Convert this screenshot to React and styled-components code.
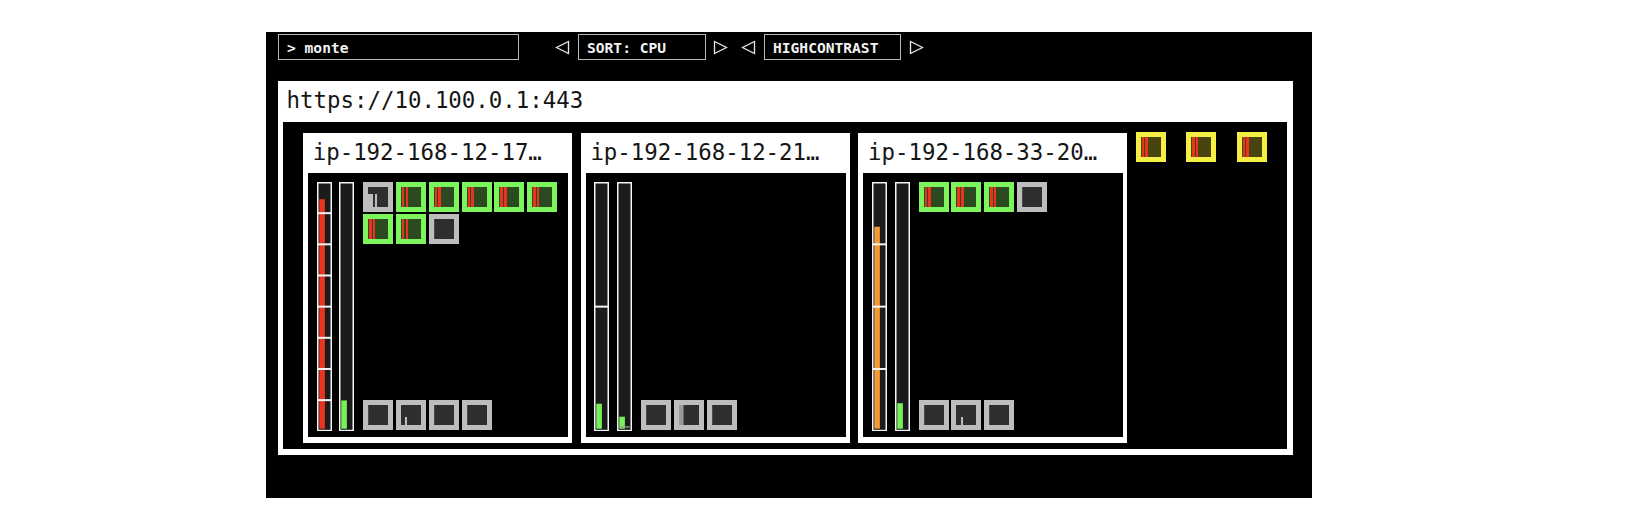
import React from "react";
import styled, { createGlobalStyle } from "styled-components";

const GlobalStyle = createGlobalStyle`
  html, body { margin: 0; padding: 0; background: #ffffff; }
  body { font-family: "DejaVu Sans Mono", "Liberation Mono", monospace; }
`;

const MONO = `"DejaVu Sans Mono", "Liberation Mono", monospace`;

const Screen = styled.div`
  margin: 32px 0 0 266px;
  width: 1046px;
  height: 466px;
  box-sizing: border-box;
  background: #000;
  padding: 2px 0 0 12px;
`;

const TopBar = styled.div`
  display: flex;
  align-items: center;
  height: 26px;
`;

const TextBox = styled.div`
  box-sizing: border-box;
  width: ${(p) => p.$w}px;
  height: 26px;
  border: 1px solid #b8b8b8;
  color: #f2f2f2;
  font-family: ${MONO};
  font-weight: bold;
  font-size: 14.6px;
  line-height: 25px;
  padding-left: 8px;
  white-space: pre;
  margin-left: ${(p) => p.$ml || 0}px;
`;

const Arrow = styled.svg`
  display: block;
  width: 15px;
  height: 15px;
  margin-left: ${(p) => p.$ml}px;
  flex: none;
`;

const ArrowLeft = ({ ml }) => (
  <Arrow $ml={ml} viewBox="0 0 15 15">
    <polygon points="13.5,1.5 13.5,13.5 1.5,7.5" fill="none" stroke="#e8e8e8" strokeWidth="1.3" />
  </Arrow>
);

const ArrowRight = ({ ml }) => (
  <Arrow $ml={ml} viewBox="0 0 15 15">
    <polygon points="1.5,1.5 1.5,13.5 13.5,7.5" fill="none" stroke="#e8e8e8" strokeWidth="1.3" />
  </Arrow>
);

const ClusterPanel = styled.div`
  margin-top: 21px;
  width: 1015px;
  box-sizing: border-box;
  background: #fff;
  padding: 0 6px 6px 5px;
`;

const ClusterTitle = styled.div`
  height: 41px;
  line-height: 39px;
  padding-left: 3.6px;
  font-family: ${MONO};
  font-size: 22.4px;
  color: #151515;
  white-space: pre;
`;

const ClusterBody = styled.div`
  height: 327px;
  box-sizing: border-box;
  background: #000;
  display: flex;
  align-items: flex-start;
  padding: 9.5px 0 0 20px;
`;

const NodeRow = styled.div`
  display: flex;
  gap: 8.7px;
  margin-top: 1.5px;
`;

const NodeCard = styled.div`
  width: 269px;
  box-sizing: border-box;
  background: #fff;
  padding: 0 4px 6px 5px;
`;

const NodeTitle = styled.div`
  height: 40px;
  line-height: 38.5px;
  padding-left: 4.7px;
  font-family: ${MONO};
  font-size: 22.4px;
  color: #151515;
  white-space: pre;
  overflow: hidden;
`;

const NodeBody = styled.div`
  height: 264px;
  box-sizing: border-box;
  background: #000;
  display: flex;
  padding: 8.7px 0 6px 8.7px;
`;

const Gauges = styled.div`
  display: flex;
  gap: 7.6px;
  flex: none;
`;

const PodArea = styled.div`
  margin-left: 9px;
  width: 200px;
  display: flex;
  flex-direction: column;
  justify-content: space-between;
  padding-bottom: 0.8px;
`;

const PodGrid = styled.div`
  display: flex;
  flex-wrap: wrap;
  gap: 2.8px;
`;

const PodStrip = styled.div`
  display: flex;
  gap: 2.8px;
  margin-left: ${(p) => p.$ml || 0}px;
`;

const POD = {
  ok: { border: "#7cf45c", inner: "#2b4a1f" },
  gray: { border: "#bdbdbd", inner: "#2e2e2e" },
  pending: { border: "#f6ef43", inner: "#49430f" },
};

const Pod = styled.div`
  width: 30px;
  height: 30px;
  box-sizing: border-box;
  flex: none;
  border: 5px solid ${(p) => POD[p.$kind].border};
  background: ${(p) => POD[p.$kind].inner};
  display: flex;
  align-items: flex-end;
`;

const Stripe = styled.div`
  flex: none;
  width: ${(p) => p.$w}px;
  height: ${(p) => p.$h}%;
  margin-left: ${(p) => p.$ml}px;
  background: ${(p) => p.$c};
`;

const RED = "#ea3420";
const GR = "#bdbdbd";

const PodView = ({ kind, stripes = [] }) => (
  <Pod $kind={kind}>
    {stripes.map((s, i) => (
      <Stripe key={i} $w={s.w} $h={s.h} $c={s.c} $ml={s.ml} />
    ))}
  </Pod>
);

const redPair = [
  { ml: 1, w: 2.4, h: 100, c: RED },
  { ml: 1.1, w: 2.6, h: 100, c: RED },
];
const okPod = { kind: "ok", stripes: redPair };
const pendPod = { kind: "pending", stripes: redPair };
const grayPlain = { kind: "gray", stripes: [{ ml: 0, w: 1, h: 100, c: "#4a4a4a" }] };
const graySmall = { kind: "gray", stripes: [{ ml: 4.4, w: 2, h: 42, c: GR }] };
const grayTall = {
  kind: "gray",
  stripes: [
    { ml: 0, w: 4.6, h: 62, c: GR },
    { ml: 2, w: 2.4, h: 62, c: GR },
  ],
};
const graySplit = { kind: "gray", stripes: [{ ml: 0, w: 4.3, h: 100, c: "#9a9a9a" }, { ml: 0, w: 0.8, h: 100, c: "#6a6a6a" }] };

const Gauge = ({ segments, fill, color, marker }) => {
  const W = 15;
  const H = 249.3;
  const lines = [];
  for (let i = 1; i < segments; i++) lines.push((H * i) / segments);
  return (
    <svg width={W} height={H} viewBox={`0 0 ${W} ${H}`} style={{ display: "block" }}>
      <rect x="0.75" y="0.75" width={W - 1.5} height={H - 1.5} fill="#1b1b1b" stroke="#f4f4f4" strokeWidth="1.5" />
      {fill > 0 && <rect x="2.3" y={H - 2.6 - fill} width="5.6" height={fill} fill={color} />}
      {marker && <rect x="2.3" y={H - 5} width="10.5" height="1.3" fill="#9a9a9a" />}
      {lines.map((y, i) => (
        <rect key={i} x="0" y={y - 1} width={W} height="2" fill="#f4f4f4" />
      ))}
    </svg>
  );
};

const GREEN = "#78f05a";
const ORANGE = "#f39a36";

const nodes = [
  {
    name: "ip-192-168-12-17…",
    cpu: { segments: 8, fill: 229.5, color: RED },
    mem: { segments: 1, fill: 28.3, color: GREEN },
    top: [grayTall, okPod, okPod, okPod, okPod, okPod, okPod, okPod, grayPlain],
    bottom: [grayPlain, graySmall, grayPlain, grayPlain],
  },
  {
    name: "ip-192-168-12-21…",
    cpu: { segments: 2, fill: 25, color: GREEN },
    mem: { segments: 1, fill: 12, color: GREEN, marker: true },
    top: [],
    bottom: [grayPlain, graySplit, grayPlain],
    bottomMl: 0.4,
  },
  {
    name: "ip-192-168-33-20…",
    cpu: { segments: 4, fill: 202, color: ORANGE },
    mem: { segments: 1, fill: 25.5, color: GREEN },
    top: [okPod, okPod, okPod, grayPlain],
    bottom: [grayPlain, graySmall, grayPlain],
  },
];

const unassigned = [pendPod, pendPod, pendPod];

const Unassigned = styled.div`
  display: flex;
  gap: 20.5px;
  margin-left: 8.5px;
`;

export default function App() {
  return (
    <>
      <GlobalStyle />
      <Screen>
        <TopBar>
          <TextBox $w={241}>{"> monte"}</TextBox>
          <ArrowLeft ml={36} />
          <TextBox $w={128} $ml={8}>{"SORT: CPU"}</TextBox>
          <ArrowRight ml={7} />
          <ArrowLeft ml={13} />
          <TextBox $w={137} $ml={8}>{"HIGHCONTRAST"}</TextBox>
          <ArrowRight ml={8} />
        </TopBar>
        <ClusterPanel>
          <ClusterTitle>https://10.100.0.1:443</ClusterTitle>
          <ClusterBody>
            <NodeRow>
              {nodes.map((n, i) => (
                <NodeCard key={i}>
                  <NodeTitle>{n.name}</NodeTitle>
                  <NodeBody>
                    <Gauges>
                      <Gauge {...n.cpu} />
                      <Gauge {...n.mem} />
                    </Gauges>
                    <PodArea>
                      <PodGrid>
                        {n.top.map((p, j) => (
                          <PodView key={j} {...p} />
                        ))}
                      </PodGrid>
                      <PodStrip $ml={n.bottomMl}>
                        {n.bottom.map((p, j) => (
                          <PodView key={j} {...p} />
                        ))}
                      </PodStrip>
                    </PodArea>
                  </NodeBody>
                </NodeCard>
              ))}
            </NodeRow>
            <Unassigned>
              {unassigned.map((p, j) => (
                <PodView key={j} {...p} />
              ))}
            </Unassigned>
          </ClusterBody>
        </ClusterPanel>
      </Screen>
    </>
  );
}
